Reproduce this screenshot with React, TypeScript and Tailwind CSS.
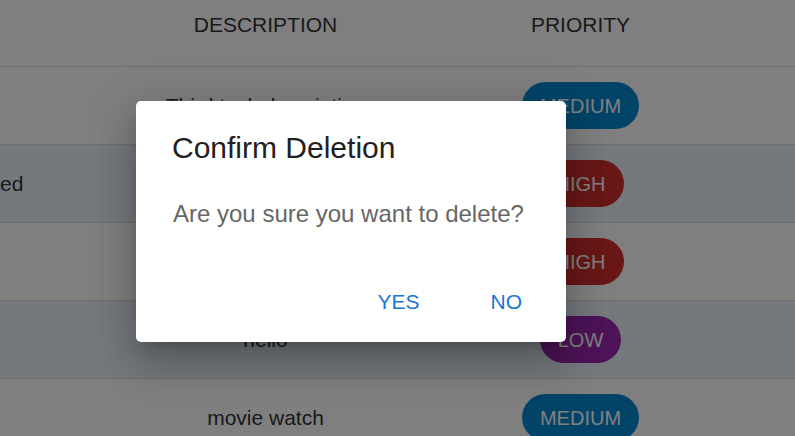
import React from 'react';

type Priority = 'LOW' | 'MEDIUM' | 'HIGH';

interface Todo {
  id: number;
  title: string;
  description: string;
  priority: Priority;
}

// table is scrolled sideways, only the tail of a long title shows
const todos: Todo[] = [
  { id: 1, title: '', description: 'Third task description', priority: 'MEDIUM' },
  { id: 2, title: 'Task completed', description: 'Second task', priority: 'HIGH' },
  { id: 3, title: '', description: 'Buy milk', priority: 'HIGH' },
  { id: 4, title: '', description: 'hello', priority: 'LOW' },
  { id: 5, title: '', description: 'movie watch', priority: 'MEDIUM' },
];

const chipColor: Record<Priority, string> = {
  LOW: 'bg-[#9c27b0]',
  MEDIUM: 'bg-[#0288d1]',
  HIGH: 'bg-[#d32f2f]',
};

const PriorityChip: React.FC<{ priority: Priority }> = ({ priority }) => (
  <span
    className={`inline-flex h-[47px] items-center rounded-full px-[18px] text-[20px] text-white ${chipColor[priority]}`}
  >
    {priority}
  </span>
);

export default function App() {
  return (
    <div className="relative h-[436px] w-[795px] overflow-hidden bg-white font-['Liberation_Sans',Arial,sans-serif] text-[21px] leading-[24px] text-[#333]">
      <div className="-ml-[207px] w-[1002px]">
        <div className="grid h-[67px] grid-cols-[315px_315px_315px_57px] border-b border-[#e0e0e0] pt-[13px] text-center">
          <div />
          <div>DESCRIPTION</div>
          <div>PRIORITY</div>
          <div />
        </div>
        {todos.map((todo, i) => (
          <div
            key={todo.id}
            className={`grid h-[78px] grid-cols-[315px_315px_315px_57px] items-center border-b border-[#e0e0e0] text-center ${
              i % 2 === 1 ? 'bg-[#ebf2fd]' : 'bg-white'
            }`}
          >
            <div className="whitespace-nowrap">{todo.title}</div>
            <div>{todo.description}</div>
            <div>
              <PriorityChip priority={todo.priority} />
            </div>
            <div />
          </div>
        ))}
      </div>

      {/* modal backdrop + dialog */}
      <div className="absolute inset-0 bg-black/50">
        <div className="absolute left-[136px] top-[101px] w-[430px] rounded-[5px] bg-white px-[37px] pt-[30px] pb-[28px] shadow-[0px_11px_15px_-7px_rgba(0,0,0,0.2),0px_24px_38px_3px_rgba(0,0,0,0.14),0px_9px_46px_8px_rgba(0,0,0,0.12)]">
          <h2 className="-ml-px text-[30px] leading-[34px] text-[#212121]">Confirm Deletion</h2>
          <p className="mt-[35px] text-[24px] leading-[28px] text-[#666]">
            Are you sure you want to delete?
          </p>
          <div className="mt-[62px] flex justify-end gap-[71px] pr-[7px] text-[21px] leading-[24px] text-[#1976d2]">
            <button>YES</button>
            <button>NO</button>
          </div>
        </div>
      </div>
    </div>
  );
}
